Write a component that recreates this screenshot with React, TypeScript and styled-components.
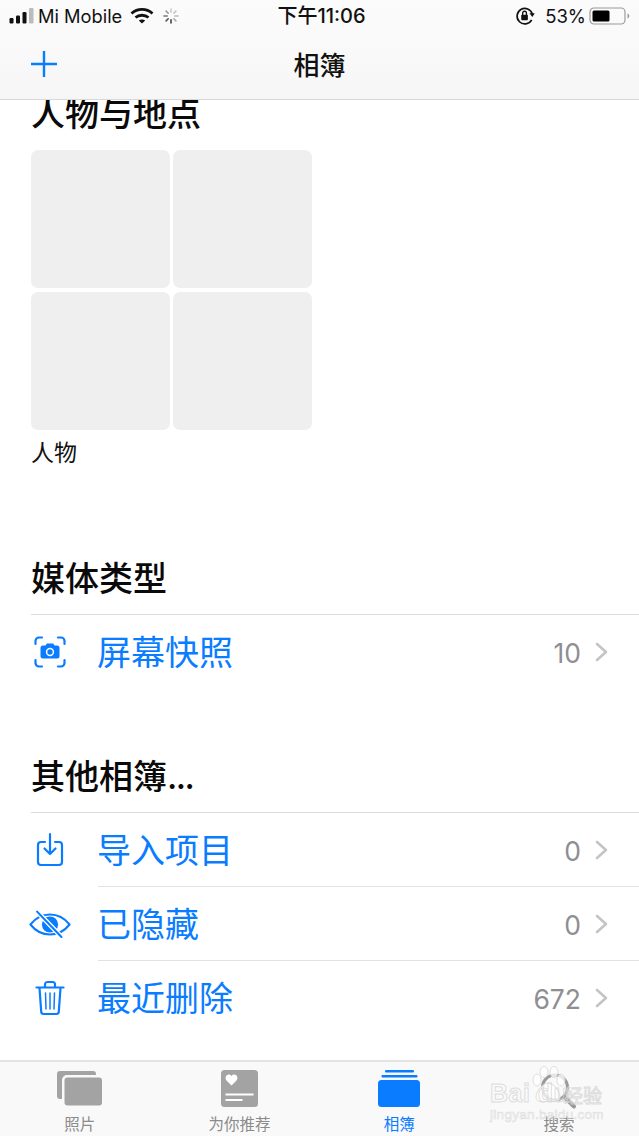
import React from 'react';
import styled, { createGlobalStyle } from 'styled-components';

const BLUE = '#0a7cff';
const CJK = '"Inter", "Noto Sans CJK SC", sans-serif';

const GlobalStyle = createGlobalStyle`
  html, body {
    margin: 0;
    padding: 0;
    background: #fff;
    font-family: ${CJK};
  }
  * { box-sizing: border-box; }
`;

const Page = styled.div`
  position: relative;
  width: 639px;
  height: 1136px;
  display: flex;
  flex-direction: column;
  overflow: hidden;
  background: #fff;
`;

const Header = styled.header`
  height: 100px;
  flex: none;
  background: linear-gradient(#fbfbfb, #f8f8f8 70%, #f6f6f6);
  border-bottom: 1px solid #d9d9d9;
`;

const StatusBar = styled.div`
  height: 32px;
  padding: 0 9px;
  display: grid;
  grid-template-columns: 1fr auto 1fr;
  align-items: center;
  color: #111;
`;

const StatusGroup = styled.div<{ $end?: boolean }>`
  display: flex;
  align-items: center;
  justify-content: ${p => (p.$end ? 'flex-end' : 'flex-start')};
  gap: ${p => (p.$end ? '10px' : '5px')};
`;

const Carrier = styled.span`
  font-size: 18.3px;
  line-height: 30px;
  margin-left: -2px;
  margin-right: 3px;
`;

const Clock = styled.span`
  font-size: 20px;
  line-height: 30px;
  font-weight: 500;
  margin-left: 4px;
`;

const Percent = styled.span`
  font-size: 18.5px;
  line-height: 30px;
  margin-right: -7px;
`;

const SpinnerSlot = styled.span`
  display: flex;
  margin-left: 4px;
`;

const NavBar = styled.div`
  height: 67px;
  padding: 0 31px 4px;
  display: grid;
  grid-template-columns: 1fr auto 1fr;
  align-items: center;
`;

const NavTitle = styled.h1`
  margin: 0;
  font-size: 26px;
  font-weight: 500;
  color: #111;
`;

const Content = styled.main`
  flex: 1;
  min-height: 0;
  overflow: hidden;
`;

const SectionHeading = styled.h2<{ $ruled?: boolean; $top?: number }>`
  margin: ${p => p.$top ?? 0}px 0 0 31px;
  height: ${p => (p.$ruled ? 60 : 46)}px;
  padding-top: ${p => (p.$ruled ? 1 : 0)}px;
  padding-bottom: ${p => (p.$ruled ? 12 : 0)}px;
  border-bottom: ${p => (p.$ruled ? '1px solid #dcdcdc' : 'none')};
  font-size: 34px;
  line-height: 46px;
  font-weight: 500;
  color: #0a0a0a;
`;

const Ellipsis = styled.span`
  letter-spacing: -1.5px;
`;

const PeopleGrid = styled.div`
  margin: 13px 0 0 31px;
  display: grid;
  grid-template-columns: 139px 139px;
  grid-auto-rows: 138px;
  column-gap: 3px;
  row-gap: 4px;
`;

const Tile = styled.div`
  background: #efefef;
  border-radius: 7px;
`;

const AlbumLabel = styled.div`
  margin: 8px 0 0 31px;
  font-size: 23px;
  line-height: 30px;
  color: #111;
`;

const Row = styled.div`
  height: 74px;
  display: flex;
  align-items: stretch;
`;

const RowIcon = styled.div`
  width: 98px;
  flex: none;
  padding-left: 10px;
  padding-right: 8px;
  display: flex;
  align-items: center;
  justify-content: center;
`;

const RowBody = styled.div<{ $ruled?: boolean }>`
  flex: 1;
  display: flex;
  align-items: center;
  padding-right: 31px;
  border-bottom: ${p => (p.$ruled ? '1px solid #e2e2e2' : 'none')};
`;

const RowTitle = styled.span`
  flex: 1;
  font-size: 34px;
  line-height: 44px;
  margin-top: 2px;
  margin-left: -1px;
  color: ${BLUE};
`;

const RowCount = styled.span`
  font-size: 26.5px;
  line-height: 36px;
  margin-top: 2px;
  color: #8e8e93;
  margin-right: 14px;
`;

const TabBar = styled.nav`
  height: 76px;
  flex: none;
  display: grid;
  grid-template-columns: repeat(4, 1fr);
  background: #f9f9f9;
  border-top: 2px solid #e3e3e3;
`;

const Tab = styled.div<{ $active?: boolean }>`
  display: flex;
  flex-direction: column;
  align-items: center;
  color: ${p => (p.$active ? BLUE : '#8b8b8b')};
`;

const TabIcon = styled.div`
  height: 52px;
  padding-top: 8px;
  display: flex;
  justify-content: center;
`;

const TabLabel = styled.span`
  font-size: 15.5px;
  line-height: 22px;
`;

const Watermark = styled.div`
  position: absolute;
  left: 488px;
  top: 1066px;
  width: 118px;
  height: 58px;
  pointer-events: none;
  color: transparent;
  -webkit-text-stroke: 1px rgba(214, 214, 214, 0.8);
`;

const WatermarkPaw = styled.svg`
  position: absolute;
  left: 40px;
  top: 0;
`;

const WatermarkName = styled.span`
  position: absolute;
  left: 2px;
  top: 13px;
  font-size: 25px;
  font-weight: 700;
  font-family: "Liberation Sans", sans-serif;
  letter-spacing: 0.5px;
`;

const WatermarkCjk = styled.span`
  position: absolute;
  left: 76px;
  top: 15px;
  font-size: 19px;
`;

const WatermarkUrl = styled.span`
  position: absolute;
  left: 2px;
  top: 41px;
  font-size: 13.5px;
  font-family: "Liberation Sans", sans-serif;
  -webkit-text-stroke: 0.6px rgba(214, 214, 214, 0.8);
  letter-spacing: 0.3px;
`;

const SignalBars = () => (
  <svg width="26" height="18" viewBox="0 0 26 18">
    <rect x="0.5" y="11" width="4" height="5.500" rx="1.200" fill="#111" />
    <rect x="7" y="8.500" width="4" height="8" rx="1.200" fill="#111" />
    <rect x="13.500" y="5" width="4" height="11.500" rx="1.200" fill="#111" />
    <rect x="20" y="1" width="4.500" height="15.500" rx="1.200" fill="#bcbcbc" />
  </svg>
);

const WifiIcon = () => (
  <svg width="24" height="18" viewBox="0 0 24 18" fill="none" stroke="#111" strokeWidth="2.800">
    <path d="M1.500 6.500C7.500 1 16.500 1 22.500 6.500" />
    <path d="M5.500 10.500C9 7.500 15 7.500 18.500 10.500" />
    <path d="M12 16.500 8.800 13.500C10.500 12.300 13.500 12.300 15.200 13.500Z" fill="#111" stroke="none" />
  </svg>
);

const Spinner = () => (
  <svg width="16" height="16" viewBox="0 0 16 16" stroke="#777" strokeWidth="1.600" strokeLinecap="round">
    <path d="M8 1v3.200" stroke="#ccc" />
    <path d="M12.900 3.100 10.800 5.200" stroke="#c4c4c4" />
    <path d="M15 8h-3.200" stroke="#bbb" />
    <path d="M12.900 12.900 10.800 10.800" stroke="#aaa" />
    <path d="M8 15v-3.200" stroke="#444" />
    <path d="M3.100 12.900 5.200 10.800" stroke="#555" />
    <path d="M1 8h3.200" stroke="#777" />
    <path d="M3.100 3.100 5.200 5.200" stroke="#999" />
  </svg>
);

const RotationLock = () => (
  <svg width="20" height="20" viewBox="0 0 18 18" fill="none">
    <path d="M15.600 7.200A7 7 0 1 0 15 12.500" stroke="#111" strokeWidth="1.500" />
    <path d="M13 6.600h4.800L15.600 10Z" fill="#111" />
    <rect x="5.600" y="7.800" width="6" height="5" rx="0.800" fill="#111" />
    <path d="M6.900 8V6.400a1.700 1.700 0 0 1 3.400 0V8" stroke="#111" strokeWidth="1.200" />
  </svg>
);

const Battery = () => (
  <svg width="41" height="18" viewBox="0 0 41 18" fill="none">
    <rect x="1" y="1" width="35" height="16" rx="4" stroke="#9a9a9a" strokeWidth="1.200" />
    <rect x="3.500" y="3.500" width="17" height="11" rx="1.500" fill="#000" />
    <path d="M38.500 6.500c1.200.4 1.800 1.300 1.800 2.500s-.6 2.100-1.800 2.500Z" fill="#9a9a9a" />
  </svg>
);

const PlusIcon = () => (
  <svg width="26" height="26" viewBox="0 0 26 26" stroke={BLUE} strokeWidth="2.400">
    <path d="M13 0v26M0 13h26" />
  </svg>
);

const ScreenshotIcon = () => (
  <svg width="32" height="32" viewBox="0 0 32 32" fill="none">
    <g stroke={BLUE} strokeWidth="2.200" strokeLinecap="round">
      <path d="M1.500 8V5a3.500 3.500 0 0 1 3.500-3.500h3" />
      <path d="M24 1.500h3A3.500 3.500 0 0 1 30.500 5v3" />
      <path d="M30.500 24v3a3.500 3.500 0 0 1-3.500 3.500h-3" />
      <path d="M8 30.500H5A3.500 3.500 0 0 1 1.500 27v-3" />
    </g>
    <path
      d="M9 9.500h2.500l1.300-2h6.400l1.300 2H23a2.500 2.500 0 0 1 2.500 2.500v8a2.500 2.500 0 0 1-2.500 2.500H9A2.500 2.500 0 0 1 6.500 20v-8A2.500 2.500 0 0 1 9 9.500Z"
      fill={BLUE}
    />
    <circle cx="16" cy="16" r="3.400" fill="none" stroke="#fff" strokeWidth="1.500" />
  </svg>
);

const ImportIcon = () => (
  <svg width="28" height="36" viewBox="0 0 28 36" fill="none" stroke={BLUE} strokeWidth="2.200" strokeLinecap="round" strokeLinejoin="round">
    <path d="M9 10H5a3 3 0 0 0-3 3v17a3 3 0 0 0 3 3h18a3 3 0 0 0 3-3V13a3 3 0 0 0-3-3h-4" />
    <path d="M14 2v20M8.500 16.500 14 22l5.500-5.500" />
  </svg>
);

const HiddenIcon = () => (
  <svg width="42" height="29" viewBox="0 0 44 30" fill="none">
    <path d="M1.500 15C7 8 14 4.500 22 4.500S37 8 42.500 15C37 22 30 25.500 22 25.500S7 22 1.500 15Z" stroke={BLUE} strokeWidth="2.200" strokeLinejoin="round" />
    <circle cx="22" cy="15" r="8.500" fill={BLUE} />
    <path d="M9.500 2.500 33.500 27.500" stroke="#fff" strokeWidth="5" />
    <path d="M8.500 1.500 34 28" stroke={BLUE} strokeWidth="2.200" strokeLinecap="round" />
  </svg>
);

const TrashIcon = () => (
  <svg width="30" height="36" viewBox="0 0 30 36" fill="none" stroke={BLUE} strokeWidth="2.200" strokeLinecap="round" strokeLinejoin="round">
    <path d="M1.500 7.500h27" />
    <path d="M10 7V4.500A2.500 2.500 0 0 1 12.500 2h5A2.500 2.500 0 0 1 20 4.500V7" />
    <path d="M4.500 8l1.700 23.500a2.500 2.500 0 0 0 2.500 2.500h12.600a2.500 2.500 0 0 0 2.500-2.500L25.500 8" />
    <path d="M10.500 13l.5 16M15 13v16M19.500 13l-.5 16" strokeWidth="1.500" />
  </svg>
);

const Chevron = () => (
  <svg width="13" height="20" viewBox="0 0 13 20" fill="none" stroke="#c4c4c7" strokeWidth="2.600" strokeLinecap="round" strokeLinejoin="round">
    <path d="M2 2l9 8-9 8" />
  </svg>
);

const PhotosTabIcon = () => (
  <svg width="46" height="36" viewBox="0 0 46 36" fill="#a3a3a3">
    <path d="M3 1h33a3 3 0 0 1 3 3v1H10a5 5 0 0 0-5 5v19H3a3 3 0 0 1-3-3V4a3 3 0 0 1 3-3Z" />
    <rect x="7.500" y="7.500" width="37.500" height="28" rx="3" />
  </svg>
);

const ForYouTabIcon = () => (
  <svg width="37" height="37" viewBox="0 0 37 37">
    <rect width="37" height="37" rx="3.500" fill="#a3a3a3" />
    <path d="M10.500 15.500 5.500 10.500C3.500 8 5 4.500 8 4.500c1.200 0 2 .6 2.500 1.500.5-.9 1.300-1.500 2.500-1.500 3 0 4.500 3.500 2.500 6Z" fill="#fff" />
    <rect x="4.500" y="23.500" width="28" height="2" fill="#fff" />
    <rect x="4.500" y="29" width="17" height="2" fill="#fff" />
  </svg>
);

const AlbumsTabIcon = () => (
  <svg width="42" height="37" viewBox="0 0 42 37" fill={BLUE}>
    <rect x="7" y="0" width="29" height="2.500" rx="1" />
    <rect x="3.500" y="5" width="36" height="2.500" rx="1" />
    <rect x="0" y="10" width="42" height="27" rx="3.500" />
  </svg>
);

const SearchTabIcon = () => (
  <svg width="42" height="42" viewBox="0 -1.500 42 42" fill="none" stroke="#999" strokeLinecap="round">
    <circle cx="17" cy="16" r="12.500" strokeWidth="3" />
    <path d="M27 26l9 9" strokeWidth="4" />
  </svg>
);

const otherAlbums = [
  { title: '导入项目', count: '0', icon: <ImportIcon />, ruled: true },
  { title: '已隐藏', count: '0', icon: <HiddenIcon />, ruled: true },
  { title: '最近删除', count: '672', icon: <TrashIcon />, ruled: false },
];

const tabs = [
  { label: '照片', icon: <PhotosTabIcon /> },
  { label: '为你推荐', icon: <ForYouTabIcon /> },
  { label: '相簿', icon: <AlbumsTabIcon />, active: true },
  { label: '搜索', icon: <SearchTabIcon /> },
];

const App = () => {
  return (
    <Page>
      <GlobalStyle />
      <Header>
        <StatusBar>
          <StatusGroup>
            <SignalBars />
            <Carrier>Mi Mobile</Carrier>
            <WifiIcon />
            <SpinnerSlot>
              <Spinner />
            </SpinnerSlot>
          </StatusGroup>
          <Clock>下午11:06</Clock>
          <StatusGroup $end>
            <RotationLock />
            <Percent>53%</Percent>
            <Battery />
          </StatusGroup>
        </StatusBar>
        <NavBar>
          <PlusIcon />
          <NavTitle>相簿</NavTitle>
        </NavBar>
      </Header>

      <Content>
        <SectionHeading $top={-9}>人物与地点</SectionHeading>
        <PeopleGrid>
          <Tile />
          <Tile />
          <Tile />
          <Tile />
        </PeopleGrid>
        <AlbumLabel>人物</AlbumLabel>

        <SectionHeading $ruled $top={87}>媒体类型</SectionHeading>
        <Row>
          <RowIcon>
            <ScreenshotIcon />
          </RowIcon>
          <RowBody>
            <RowTitle>屏幕快照</RowTitle>
            <RowCount>10</RowCount>
            <Chevron />
          </RowBody>
        </Row>

        <SectionHeading $ruled $top={64}>其他相簿<Ellipsis>...</Ellipsis></SectionHeading>
        {otherAlbums.map(album => (
          <Row key={album.title}>
            <RowIcon>{album.icon}</RowIcon>
            <RowBody $ruled={album.ruled}>
              <RowTitle>{album.title}</RowTitle>
              <RowCount>{album.count}</RowCount>
              <Chevron />
            </RowBody>
          </Row>
        ))}
      </Content>

      <TabBar>
        {tabs.map(tab => (
          <Tab key={tab.label} $active={tab.active}>
            <TabIcon>{tab.icon}</TabIcon>
            <TabLabel>{tab.label}</TabLabel>
          </Tab>
        ))}
      </TabBar>

      <Watermark>
        <WatermarkPaw width="38" height="40" viewBox="0 0 38 40" fill="rgba(255,255,255,0.75)" stroke="rgba(214,214,214,0.8)">
          <ellipse cx="9" cy="14" rx="4" ry="6" />
          <ellipse cx="16" cy="6" rx="4" ry="5.500" />
          <ellipse cx="26" cy="6" rx="4" ry="5.500" />
          <ellipse cx="33" cy="14" rx="4" ry="6" />
          <path d="M20 17c5 0 12 8 12 14 0 6-7 5-12 4-5 1-12 2-12-4 0-6 7-14 12-14Z" />
        </WatermarkPaw>
        <WatermarkName>Bai du</WatermarkName>
        <WatermarkCjk>经验</WatermarkCjk>
        <WatermarkUrl>jingyan.baidu.com</WatermarkUrl>
      </Watermark>
    </Page>
  );
};

export default App;
